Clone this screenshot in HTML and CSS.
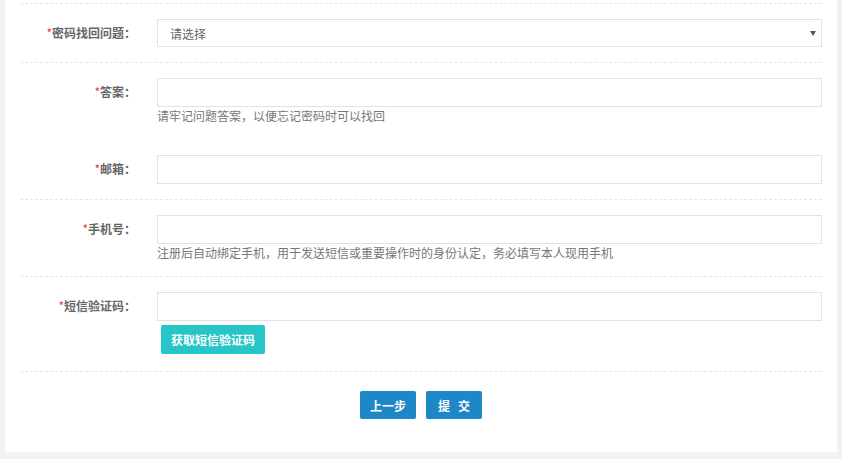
FILE: index.html
```html
<!DOCTYPE html>
<html lang="zh-CN">
<head>
    <meta charset="UTF-8">
    <meta name="viewport" content="width=device-width, initial-scale=1.0">
    <title>找回密码设置</title>
    <link rel="stylesheet" href="styles.css">
</head>
<body>
    <div class="panel">
        <div class="form">
            <div class="form-row">
                <label class="form-label"><i>*</i>密码找回问题：</label>
                <div class="form-field">
                    <div class="select-wrap">
                        <select class="form-input">
                            <option>请选择</option>
                        </select>
                    </div>
                </div>
            </div>

            <div class="form-row no-line">
                <label class="form-label"><i>*</i>答案：</label>
                <div class="form-field">
                    <input class="form-input" type="text">
                    <p class="form-tip">请牢记问题答案，以便忘记密码时可以找回</p>
                </div>
            </div>

            <div class="form-row">
                <label class="form-label"><i>*</i>邮箱：</label>
                <div class="form-field">
                    <input class="form-input" type="text">
                </div>
            </div>

            <div class="form-row">
                <label class="form-label"><i>*</i>手机号：</label>
                <div class="form-field">
                    <input class="form-input" type="text">
                    <p class="form-tip">注册后自动绑定手机，用于发送短信或重要操作时的身份认定，务必填写本人现用手机</p>
                </div>
            </div>

            <div class="form-row sms-row">
                <label class="form-label"><i>*</i>短信验证码：</label>
                <div class="form-field">
                    <input class="form-input" type="text">
                    <button class="btn btn-sms" type="button">获取短信验证码</button>
                </div>
            </div>

            <div class="form-actions">
                <button class="btn btn-blue" type="button">上一步</button>
                <button class="btn btn-blue" type="button">提&nbsp;&nbsp;&nbsp;交</button>
            </div>
        </div>
    </div>
</body>
</html>
```

FILE: styles.css
```css
body {
    margin: 0;
    padding: 0;
    background: #f2f2f2;
    font-family: "Microsoft YaHei", "Noto Sans CJK SC", sans-serif;
    font-size: 12px;
    color: #666;
}

.panel {
    background: #fff;
    margin: 0 5px 9px;
    padding: 3px 15px 0;
}

.form {
    border-top: 1px dashed #e6e6e6;
}

.form-row {
    display: flex;
    padding: 15px 0;
    border-bottom: 1px dashed #e6e6e6;
}

.form-row.no-line {
    border-bottom: none;
    padding-bottom: 16px;
}

.form-row.sms-row {
    padding-bottom: 17px;
}

.form-label {
    width: 116px;
    flex: none;
    padding-right: 21px;
    text-align: right;
    line-height: 28px;
    font-weight: bold;
    color: #666;
}

.form-label i {
    font-style: normal;
    font-weight: normal;
    color: #e4393c;
}

.form-field {
    flex: 1;
}

.form-input {
    display: block;
    width: 100%;
    height: 28px;
    box-sizing: border-box;
    margin: 0;
    padding: 0 12px;
    border: 1px solid #e2e2e2;
    background: #fff;
    font-family: inherit;
    font-size: 12px;
    color: #666;
    outline: none;
}

input.form-input {
    height: 29px;
}

select.form-input {
    appearance: none;
    -webkit-appearance: none;
    border-radius: 0;
}

.select-wrap {
    position: relative;
}

.select-wrap::after {
    content: '';
    position: absolute;
    right: 6px;
    top: 12px;
    border-left: 3px solid transparent;
    border-right: 3px solid transparent;
    border-top: 5px solid #555;
}

.form-tip {
    margin: 0;
    line-height: 17px;
    color: #777;
}

.btn {
    border: none;
    border-radius: 2px;
    color: #fff;
    font-family: inherit;
    font-size: 12px;
    cursor: pointer;
    outline: none;
}

.btn-sms {
    display: block;
    margin: 4px 0 0 4px;
    width: 104px;
    height: 29px;
    background: #26c6c8;
    font-weight: bold;
}

.form-actions {
    display: flex;
    justify-content: center;
    gap: 10px;
    padding: 19px 0 33px;
}

.btn-blue {
    width: 56px;
    height: 28px;
    background: #1e87c8;
    font-weight: bold;
}
```
